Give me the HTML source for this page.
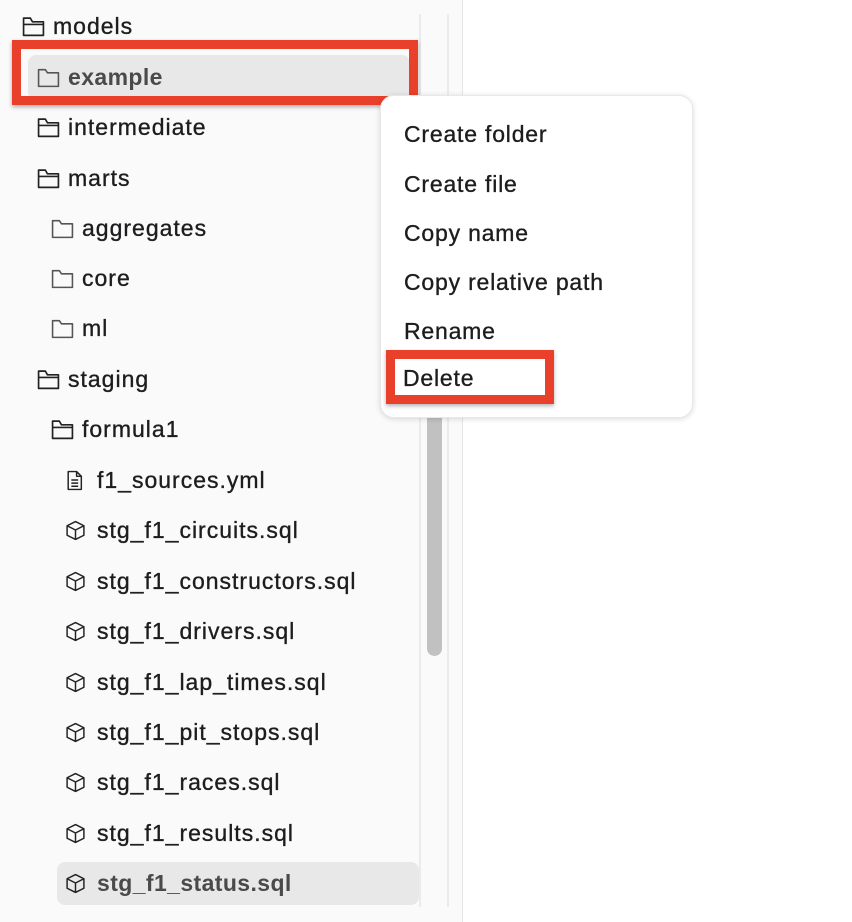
<!DOCTYPE html>
<html><head><meta charset="utf-8"><style>
*{margin:0;padding:0;box-sizing:border-box}
body{width:852px;height:922px;background:#fff;font-family:"Liberation Sans",sans-serif;position:relative;overflow:hidden;color:#1d1d1f}
.side{position:absolute;left:0;top:0;width:463px;height:922px;background:#fafafa;border-right:1px solid #e6e6e6}
.track{position:absolute;left:419px;top:14px;width:30px;height:893px;border-left:2px solid #ebebeb;border-right:2px solid #ebebeb;background:#fafafa}
.thumb{position:absolute;left:427px;top:380px;width:15px;height:276px;border-radius:8px;background:#c1c1c1}
.row{position:absolute;height:30px;line-height:30px;font-size:23px;letter-spacing:1px;white-space:nowrap;-webkit-text-stroke:0.35px #1d1d1f}
.row svg{position:absolute;left:0;top:4px}
.row span{position:absolute;top:-1px}
.b{color:#4a4a4a;font-weight:bold;letter-spacing:0.4px;-webkit-text-stroke:0}
.hl{position:absolute;background:#e9e8e9;border-radius:8px}
.red{position:absolute;border:9px solid #e8402a;box-shadow:0 2px 4px rgba(0,0,0,.3)}
.menu{position:absolute;left:380px;top:95px;width:313px;height:323px;background:#fff;border-radius:14px;box-shadow:0 1px 6px rgba(0,0,0,.15);border:1px solid #e8e8e8}
.mi{position:absolute;left:23px;font-size:23px;letter-spacing:0.8px;line-height:30px;color:#1d1d1f;white-space:nowrap;-webkit-text-stroke:0.35px #1d1d1f}
</style></head><body>
<div class="side"></div>
<div class="track"></div>
<div class="thumb"></div>
<div class="hl" style="left:28px;top:55px;width:382px;height:45px"></div>
<div class="hl" style="left:57px;top:862px;width:362px;height:43px"></div>
<div class="red" style="left:12px;top:40px;width:406px;height:65px"></div>

<svg width="0" height="0" style="position:absolute"><defs>
<symbol id="fo" viewBox="0 0 22 20"><path d="M1.5 3.5V18.5H20.5V5.5H10L8 2H1.5Z M1.5 8H20.5" fill="none" stroke="#222" stroke-width="1.6" stroke-linejoin="round"/></symbol>
<symbol id="fc" viewBox="0 0 22 20"><path d="M1.5 3V18.5H20.5V5.5H10L8 2.5H1.5Z" fill="none" stroke="#555" stroke-width="1.5" stroke-linejoin="round"/></symbol>
<symbol id="doc" viewBox="0 0 16 20"><path d="M2 1.5H10L14.5 6V18.5H2Z M10 1.5V6H14.5 M5 9.5H11.5 M5 12.5H11.5 M5 15.5H11.5" fill="none" stroke="#222" stroke-width="1.4" stroke-linejoin="round"/></symbol>
<symbol id="cube" viewBox="0 0 20 20"><path d="M10 1.5L18 5.5V14.5L10 18.5L2 14.5V5.5Z M2 5.5L10 9.5L18 5.5 M10 9.5V18.5" fill="none" stroke="#222" stroke-width="1.4" stroke-linejoin="round"/></symbol>
</defs></svg>

<div class="row" style="left:22px;top:12px"><svg width="23" height="21"><use href="#fo"/></svg><span style="left:31px">models</span></div>
<div class="row b" style="left:37px;top:63px"><svg width="23" height="21"><use href="#fc"/></svg><span style="left:31px">example</span></div>
<div class="row" style="left:37px;top:113px"><svg width="23" height="21"><use href="#fo"/></svg><span style="left:31px">intermediate</span></div>
<div class="row" style="left:37px;top:164px"><svg width="23" height="21"><use href="#fo"/></svg><span style="left:31px">marts</span></div>
<div class="row" style="left:51px;top:214px"><svg width="23" height="21"><use href="#fc"/></svg><span style="left:31px">aggregates</span></div>
<div class="row" style="left:51px;top:264px"><svg width="23" height="21"><use href="#fc"/></svg><span style="left:31px">core</span></div>
<div class="row" style="left:51px;top:314px"><svg width="23" height="21"><use href="#fc"/></svg><span style="left:31px">ml</span></div>
<div class="row" style="left:37px;top:365px"><svg width="23" height="21"><use href="#fo"/></svg><span style="left:31px">staging</span></div>
<div class="row" style="left:51px;top:415px"><svg width="23" height="21"><use href="#fo"/></svg><span style="left:31px">formula1</span></div>
<div class="row" style="left:66px;top:466px"><svg width="17" height="21"><use href="#doc"/></svg><span style="left:31px">f1_sources.yml</span></div>
<div class="row" style="left:65px;top:516px"><svg width="21" height="21"><use href="#cube"/></svg><span style="left:32px">stg_f1_circuits.sql</span></div>
<div class="row" style="left:65px;top:567px"><svg width="21" height="21"><use href="#cube"/></svg><span style="left:32px">stg_f1_constructors.sql</span></div>
<div class="row" style="left:65px;top:617px"><svg width="21" height="21"><use href="#cube"/></svg><span style="left:32px">stg_f1_drivers.sql</span></div>
<div class="row" style="left:65px;top:668px"><svg width="21" height="21"><use href="#cube"/></svg><span style="left:32px">stg_f1_lap_times.sql</span></div>
<div class="row" style="left:65px;top:718px"><svg width="21" height="21"><use href="#cube"/></svg><span style="left:32px">stg_f1_pit_stops.sql</span></div>
<div class="row" style="left:65px;top:768px"><svg width="21" height="21"><use href="#cube"/></svg><span style="left:32px">stg_f1_races.sql</span></div>
<div class="row" style="left:65px;top:819px"><svg width="21" height="21"><use href="#cube"/></svg><span style="left:32px">stg_f1_results.sql</span></div>
<div class="row b" style="left:65px;top:869px"><svg width="21" height="21"><use href="#cube"/></svg><span style="left:32px">stg_f1_status.sql</span></div>

<div class="menu">
<div class="mi" style="top:23px">Create folder</div>
<div class="mi" style="top:73px">Create file</div>
<div class="mi" style="top:122px">Copy name</div>
<div class="mi" style="top:171px">Copy relative path</div>
<div class="mi" style="top:220px">Rename</div>
</div>
<div class="red" style="left:386px;top:350px;width:168px;height:54px;background:#fff"></div>
<div class="mi" style="left:403px;top:363px;position:absolute">Delete</div>
</body></html>
